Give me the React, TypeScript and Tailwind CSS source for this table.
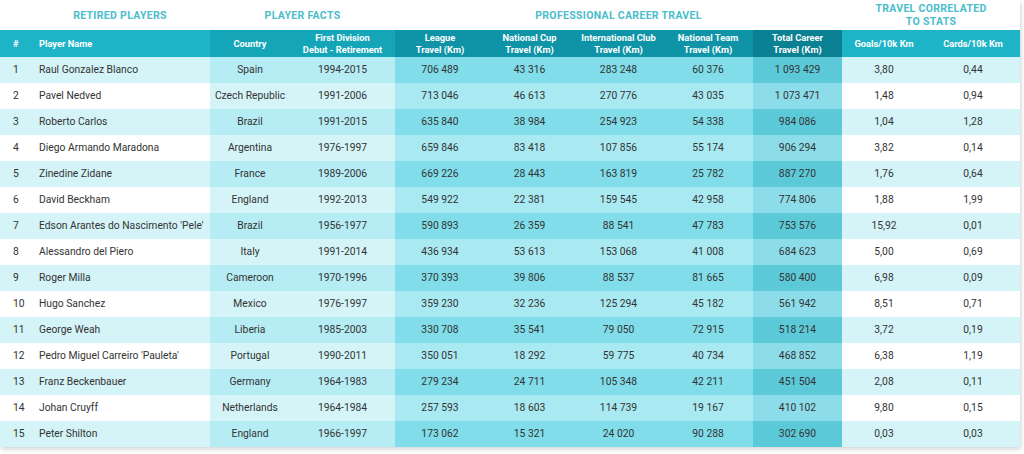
import React from "react";

type Row = [string, string, string, string, string, string, string, string, string, string, string];

const rows: Row[] = [
  ["1", "Raul Gonzalez Blanco", "Spain", "1994-2015", "706 489", "43 316", "283 248", "60 376", "1 093 429", "3,80", "0,44"],
  ["2", "Pavel Nedved", "Czech Republic", "1991-2006", "713 046", "46 613", "270 776", "43 035", "1 073 471", "1,48", "0,94"],
  ["3", "Roberto Carlos", "Brazil", "1991-2015", "635 840", "38 984", "254 923", "54 338", "984 086", "1,04", "1,28"],
  ["4", "Diego Armando Maradona", "Argentina", "1976-1997", "659 846", "83 418", "107 856", "55 174", "906 294", "3,82", "0,14"],
  ["5", "Zinedine Zidane", "France", "1989-2006", "669 226", "28 443", "163 819", "25 782", "887 270", "1,76", "0,64"],
  ["6", "David Beckham", "England", "1992-2013", "549 922", "22 381", "159 545", "42 958", "774 806", "1,88", "1,99"],
  ["7", "Edson Arantes do Nascimento 'Pele'", "Brazil", "1956-1977", "590 893", "26 359", "88 541", "47 783", "753 576", "15,92", "0,01"],
  ["8", "Alessandro del Piero", "Italy", "1991-2014", "436 934", "53 613", "153 068", "41 008", "684 623", "5,00", "0,69"],
  ["9", "Roger Milla", "Cameroon", "1970-1996", "370 393", "39 806", "88 537", "81 665", "580 400", "6,98", "0,09"],
  ["10", "Hugo Sanchez", "Mexico", "1976-1997", "359 230", "32 236", "125 294", "45 182", "561 942", "8,51", "0,71"],
  ["11", "George Weah", "Liberia", "1985-2003", "330 708", "35 541", "79 050", "72 915", "518 214", "3,72", "0,19"],
  ["12", "Pedro Miguel Carreiro 'Pauleta'", "Portugal", "1990-2011", "350 051", "18 292", "59 775", "40 734", "468 852", "6,38", "1,19"],
  ["13", "Franz Beckenbauer", "Germany", "1964-1983", "279 234", "24 711", "105 348", "42 211", "451 504", "2,08", "0,11"],
  ["14", "Johan Cruyff", "Netherlands", "1964-1984", "257 593", "18 603", "114 739", "19 167", "410 102", "9,80", "0,15"],
  ["15", "Peter Shilton", "England", "1966-1997", "173 062", "15 321", "24 020", "90 288", "302 690", "0,03", "0,03"],
];

const gridCols = "grid grid-cols-[30px_180px_80px_105px_90px_89px_89px_90px_89px_84px_94px]";

// group index per column: 0 = retired players / stats, 1 = player facts, 2 = career travel, 3 = total
const colGroup = [0, 0, 1, 1, 2, 2, 2, 2, 3, 0, 0];

const oddBg = ["bg-[#d4f4f8]", "bg-[#b6ecf4]", "bg-[#80dde9]", "bg-[#5cc9d9]"];
const evenBg = ["bg-white", "bg-[#d4f4f8]", "bg-[#a9e9f2]", "bg-[#8cdce9]"];
const headBg = ["bg-[#1db4c7]", "bg-[#15a5b8]", "bg-[#0f94a7]", "bg-[#0a8192]"];

const headers: React.ReactNode[] = [
  "#",
  "Player Name",
  "Country",
  <>First Division<br />Debut - Retirement</>,
  <>League<br />Travel (Km)</>,
  <>National Cup<br />Travel (Km)</>,
  <>International Club<br />Travel (Km)</>,
  <>National Team<br />Travel (Km)</>,
  <>Total Career<br />Travel (Km)</>,
  "Goals/10k Km",
  "Cards/10k Km",
];

export default function App() {
  return (
    <div
      className="w-[1024px] h-[454px] bg-white overflow-hidden"
      style={{ fontFamily: "Roboto, 'Liberation Sans', sans-serif" }}
    >
      <div className="w-[1020px] bg-white shadow-[1px_2px_5px_rgba(0,0,0,0.18)]">
        {/* group titles */}
        <div className={`${gridCols} h-[30px] text-[#4bbdcc] font-bold text-[10.5px] tracking-[0.03em] uppercase leading-[13px]`}>
          <div />
          <div className="flex items-center justify-center">Retired Players</div>
          <div className="col-span-2 flex items-center justify-center">Player Facts</div>
          <div className="col-span-5 flex items-center justify-center">Professional Career Travel</div>
          <div className="col-span-2 flex items-center justify-center text-center">
            Travel Correlated<br />To Stats
          </div>
        </div>
        {/* header */}
        <div className={`${gridCols} h-[27px] text-white font-bold text-[9.3px] leading-[12px]`}>
          {headers.map((h, i) => (
            <div
              key={i}
              className={`${headBg[colGroup[i]]} flex items-center ${
                i === 0 ? "pl-[13px]" : i === 1 ? "pl-[9px]" : "justify-center text-center"
              }`}
            >
              <span>{h}</span>
            </div>
          ))}
        </div>
        {/* rows */}
        {rows.map((r, ri) => (
          <div key={ri} className={`${gridCols} h-[26px] text-[10.3px] text-[#333333]`}>
            {r.map((c, ci) => (
              <div
                key={ci}
                className={`${ri % 2 === 0 ? oddBg[colGroup[ci]] : evenBg[colGroup[ci]]} flex items-center ${
                  ci === 0 ? "pl-[13px]" : ci === 1 ? "pl-[9px] whitespace-nowrap" : "justify-center"
                }`}
              >
                {c}
              </div>
            ))}
          </div>
        ))}
      </div>
    </div>
  );
}
